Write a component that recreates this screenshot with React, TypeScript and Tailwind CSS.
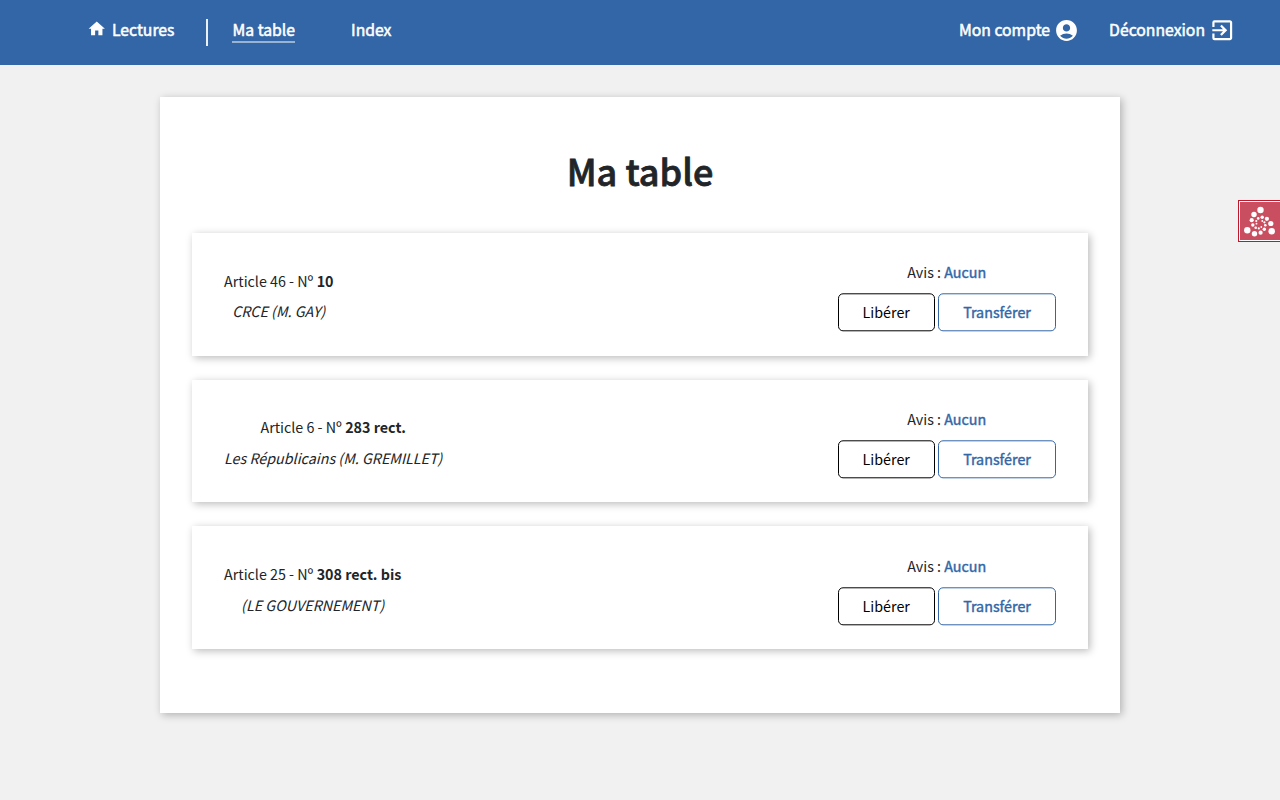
import { MdAccountCircle, MdExitToApp, MdHome } from "react-icons/md";

const notices = [
  { article: "Article 46", num: "10", author: "CRCE (M. GAY)" },
  { article: "Article 6", num: "283 rect.", author: "Les Républicains (M. GREMILLET)" },
  { article: "Article 25", num: "308 rect. bis", author: "(LE GOUVERNEMENT)" },
];

const dots = [
  [20.5, 10, 3.2], [14, 14.5, 2.7], [11.7, 20.2, 2.1], [12.8, 25, 1.7], [15.7, 27.8, 1.3], [18.8, 28.4, 1.1], [21.3, 27, 0.9],
  [7.3, 30.3, 3.2], [14.5, 33.7, 2.7], [20.6, 32.7, 2.1], [24.3, 29.2, 1.7], [25.3, 25.3, 1.3], [24.4, 22.3, 1.1], [22.3, 21, 0.9],
  [31.7, 31.2, 3.2], [30.8, 23.5, 2.6], [26.9, 18.8, 2.1], [22.2, 17.2, 1.7], [18.2, 18.4, 1.3], [16.3, 21, 1.1], [16.5, 23.7, 0.9],
];

export default function App() {
  return (
    <div className="min-h-screen bg-[#f1f1f1] font-['Noto_Sans_CJK_SC',sans-serif] text-[14.3px] leading-6 text-[#212529]">
      <header className="flex h-[65px] items-start justify-between bg-[#3266a6] pr-[45px] pl-[86.5px] text-[15.75px] text-white [-webkit-text-stroke:0.5px_currentColor]">
        <nav className="flex items-start">
          <a className="flex pt-[18px] leading-6">
            <MdHome className="mt-[1px] mr-[6px] size-[19.5px]" strokeWidth={0} />
            Lectures
          </a>
          <span className="mt-[19px] ml-8 h-[27px] w-[2px] bg-white/90" />
          <a className="mt-[18px] ml-6 h-[25px] border-b-2 border-white/50 leading-6">Ma table</a>
          <a className="mt-[18px] ml-14 leading-6">Index</a>
        </nav>
        <div className="flex gap-[30px] pt-[18px]">
          <a className="flex items-start">
            Mon compte
            <MdAccountCircle className="ml-1 size-[25px]" strokeWidth={0} />
          </a>
          <a className="flex items-start">
            Déconnexion
            <MdExitToApp className="-mt-[1.5px] -mr-[0.5px] ml-[4px] size-[26.5px]" strokeWidth={0} />
          </a>
        </div>
      </header>
      <main className="mx-auto mt-8 h-[616px] w-[960px] bg-white px-8 pt-[49px] shadow-[2px_2px_8px_rgba(0,0,0,0.27)]">
        <h1 className="mb-[39px] text-center text-[36px] leading-[48px] font-medium [-webkit-text-stroke:0.8px_currentColor]">Ma table</h1>
        <ul className="flex flex-col gap-6">
          {notices.map((n) => (
            <li
              key={n.num}
              className="flex h-[122.67px] items-start justify-between bg-white px-8 shadow-[2px_2px_8px_rgba(0,0,0,0.27)]"
            >
              <div className="pt-[35.7px] text-center">
                <p>
                  {n.article} - Nº <strong className="font-bold">{n.num}</strong>
                </p>
                <p className="mt-[6.5px] italic">{n.author}</p>
              </div>
              <div className="w-[218.5px] pt-[27.2px] text-center">
                <p>
                  Avis : <span className="text-[#3266a6] [-webkit-text-stroke:0.4px_currentColor]">Aucun</span>
                </p>
                <div className="mt-[9px] flex translate-y-[0.3px] justify-between">
                  <a className="h-[38px] w-[97.5px] rounded-[5px] border border-black leading-[35px] text-black">Libérer</a>
                  <a className="h-[38px] w-[118px] rounded-[5px] border border-[#3266a6] leading-[35px] text-[#3266a6] [-webkit-text-stroke:0.4px_currentColor]">
                    Transférer
                  </a>
                </div>
              </div>
            </li>
          ))}
        </ul>
      </main>
      <aside className="fixed top-[200px] right-0 h-[42px] w-[42px] border border-r-0 border-[#c1172c] bg-white p-px pr-0">
        <div className="h-full bg-[#c94f60]">
          <svg viewBox="2 2 40 38" className="h-full w-full" fill="#fff">
            {dots.map(([x, y, r]) => (
              <circle key={`${x}-${y}`} cx={x + 2} cy={y} r={r} />
            ))}
          </svg>
        </div>
      </aside>
    </div>
  );
}
